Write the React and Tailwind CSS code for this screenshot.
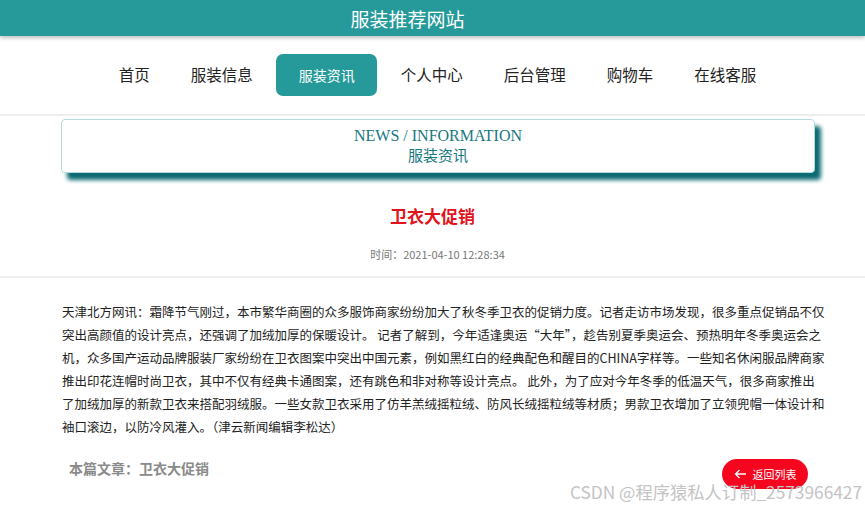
import React from 'react'

const navItems = ['首页', '服装信息', '服装资讯', '个人中心', '后台管理', '购物车', '在线客服']

const lines = [
  '天津北方网讯：霜降节气刚过，本市繁华商圈的众多服饰商家纷纷加大了秋冬季卫衣的促销力度。记者走访市场发现，很多重点促销品不仅',
  '突出高颜值的设计亮点，还强调了加绒加厚的保暖设计。 记者了解到，今年适逢奥运“大年”，趁告别夏季奥运会、预热明年冬季奥运会之',
  '机，众多国产运动品牌服装厂家纷纷在卫衣图案中突出中国元素，例如黑红白的经典配色和醒目的CHINA字样等。一些知名休闲服品牌商家',
  '推出印花连帽时尚卫衣，其中不仅有经典卡通图案，还有跳色和非对称等设计亮点。 此外，为了应对今年冬季的低温天气，很多商家推出',
  '了加绒加厚的新款卫衣来搭配羽绒服。一些女款卫衣采用了仿羊羔绒摇粒绒、防风长绒摇粒绒等材质；男款卫衣增加了立领兜帽一体设计和',
  '袖口滚边，以防冷风灌入。（津云新闻编辑李松达）',
]

function App() {
  return (
    <div className="relative min-h-[507px] bg-white font-['Noto_Sans_CJK_SC','Noto_Sans',sans-serif] text-[#222]">
      {/* top bar */}
      <div className="relative z-10 flex h-[36px] items-center justify-center bg-[#269a9a] pr-[50px] shadow-[0_2px_4px_rgba(0,0,0,0.25)]">
        <span className="text-[19px] leading-none text-white">服装推荐网站</span>
      </div>

      {/* nav */}
      <nav className="flex items-center justify-center border-b-2 border-[#eeeeee] py-[18px] pl-[10px]">
        {navItems.map((item) =>
          item === '服装资讯' ? (
            <span key={item} className="mx-[3px] flex h-[42px] w-[101px] items-center justify-center rounded-[7px] bg-[#269a9a] text-[14px] text-white">
              {item}
            </span>
          ) : (
            <span key={item} className="flex h-[42px] items-center px-[20.5px] text-[15.5px] text-[#222]">
              {item}
            </span>
          )
        )}
      </nav>

      {/* section header */}
      <div className="ml-[61px] mr-[50px] mt-[3px] flex h-[54px] flex-col items-center justify-center rounded-[4px] border border-[#b5dcdd] bg-white shadow-[6px_7px_4px_#0c6a72]">
        <span className="font-['Liberation_Serif','Noto_Sans_CJK_SC',serif] text-[16px] leading-[21px] text-[#17787e]">NEWS / INFORMATION</span>
        <span className="font-['Liberation_Serif','Noto_Sans_CJK_SC',serif] text-[15px] leading-[21px] text-[#17787e]">服装资讯</span>
      </div>

      {/* article head */}
      <div className="flex flex-col items-center border-b-2 border-[#eeeeee] pb-[14px] pt-[31px]">
        <h1 className="text-[17px] font-bold leading-[24px] text-[#e0141c]">卫衣大促销</h1>
        <p className="mt-[18px] pl-[10px] text-[11px] leading-[16px] text-[#777]">时间：2021-04-10 12:28:34</p>
      </div>

      {/* body */}
      <div className="pl-[62px] pr-[20px] pt-[22px] text-[12.5px] leading-[23px] text-[#222]">
        {lines.map((l, i) => (
          <p key={i} className="whitespace-nowrap">{l}</p>
        ))}
      </div>

      {/* footer */}
      <div className="flex items-start justify-between pl-[69px] pr-[57px] pt-[20px]">
        <span className="text-[14px] font-bold leading-[20px] text-[#8a8a8a]">本篇文章：卫衣大促销</span>
        <button className="mt-[1px] flex h-[30px] w-[86px] items-center justify-center gap-[6px] rounded-full bg-[#f5051e] text-[11px] text-white">
          <svg width="13" height="10" viewBox="0 0 13 10" fill="none" stroke="white" strokeWidth="1.3">
            <path d="M12 5H1.5M5.5 1L1.5 5l4 4" />
          </svg>
          返回列表
        </button>
      </div>

      {/* watermark */}
      <span className="pointer-events-none absolute left-[570px] top-[481px] whitespace-nowrap text-[17.3px] leading-[22px] text-[#c4c4c4]">
        CSDN @程序猿私人订制_2573966427
      </span>
    </div>
  )
}

export default App
